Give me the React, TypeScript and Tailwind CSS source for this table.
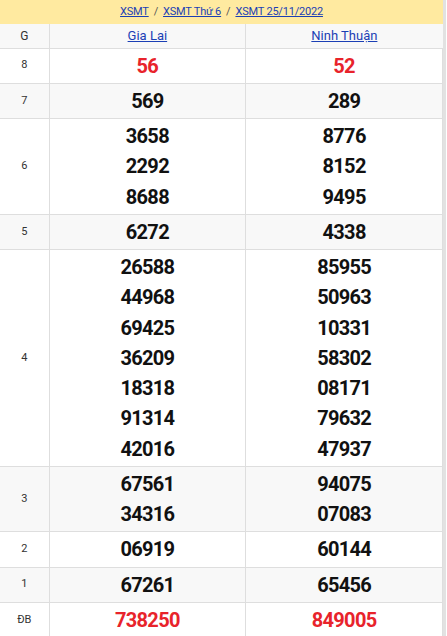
const rows: { label: string; a: string[]; b: string[]; red?: boolean }[] = [
  { label: "8", a: ["56"], b: ["52"], red: true },
  { label: "7", a: ["569"], b: ["289"] },
  { label: "6", a: ["3658", "2292", "8688"], b: ["8776", "8152", "9495"] },
  { label: "5", a: ["6272"], b: ["4338"] },
  {
    label: "4",
    a: ["26588", "44968", "69425", "36209", "18318", "91314", "42016"],
    b: ["85955", "50963", "10331", "58302", "08171", "79632", "47937"],
  },
  { label: "3", a: ["67561", "34316"], b: ["94075", "07083"] },
  { label: "2", a: ["06919"], b: ["60144"] },
  { label: "1", a: ["67261"], b: ["65456"] },
  { label: "ĐB", a: ["738250"], b: ["849005"], red: true },
];

function Cell({ nums, red }: { nums: string[]; red?: boolean }) {
  return (
    <td className="border border-[#dedede] py-[2px] text-center align-middle">
      {nums.map((n) => (
        <div
          key={n}
          className={`text-[20px] font-bold leading-[30.25px] tracking-[-0.7px] ${red ? "text-[#e8232b]" : "text-[#111]"}`}
        >
          {n}
        </div>
      ))}
    </td>
  );
}

export default function App() {
  return (
    <div className="w-[447px] bg-white font-['Roboto',sans-serif]">
      <div className="w-[446px] border-r-[3px] border-[#e2e2e2]">
        <div className="flex h-[24px] items-center justify-center gap-[5px] bg-[#ffeaa0] text-[11px] tracking-[-0.2px] text-[#555]">
          <a className="text-[#1b3fb5] underline">XSMT</a>
          <span>/</span>
          <a className="text-[#1b3fb5] underline">XSMT Thứ 6</a>
          <span>/</span>
          <a className="text-[#1b3fb5] underline">XSMT 25/11/2022</a>
        </div>
        <table className="w-full table-fixed border-collapse">
          <colgroup>
            <col className="w-[49px]" />
            <col />
            <col />
          </colgroup>
          <thead>
            <tr className="h-[24px] bg-[#f8f8f8]">
              <th className="border border-t-0 border-l-0 border-[#dedede] text-[12px] font-normal text-[#333]">G</th>
              <th className="border border-t-0 border-[#dedede] text-[13px] font-normal">
                <a className="text-[#1b3fb5] underline">Gia Lai</a>
              </th>
              <th className="border border-t-0 border-r-0 border-[#dedede] text-[13px] font-normal">
                <a className="text-[#1b3fb5] underline">Ninh Thuận</a>
              </th>
            </tr>
          </thead>
          <tbody>
            {rows.map((r, i) => (
              <tr key={r.label} className={i % 2 === 1 ? "bg-[#f8f8f8]" : "bg-white"}>
                <td className="border border-l-0 border-[#dedede] text-center text-[11px] text-[#333]">{r.label}</td>
                <Cell nums={r.a} red={r.red} />
                <Cell nums={r.b} red={r.red} />
              </tr>
            ))}
          </tbody>
        </table>
      </div>
    </div>
  );
}
